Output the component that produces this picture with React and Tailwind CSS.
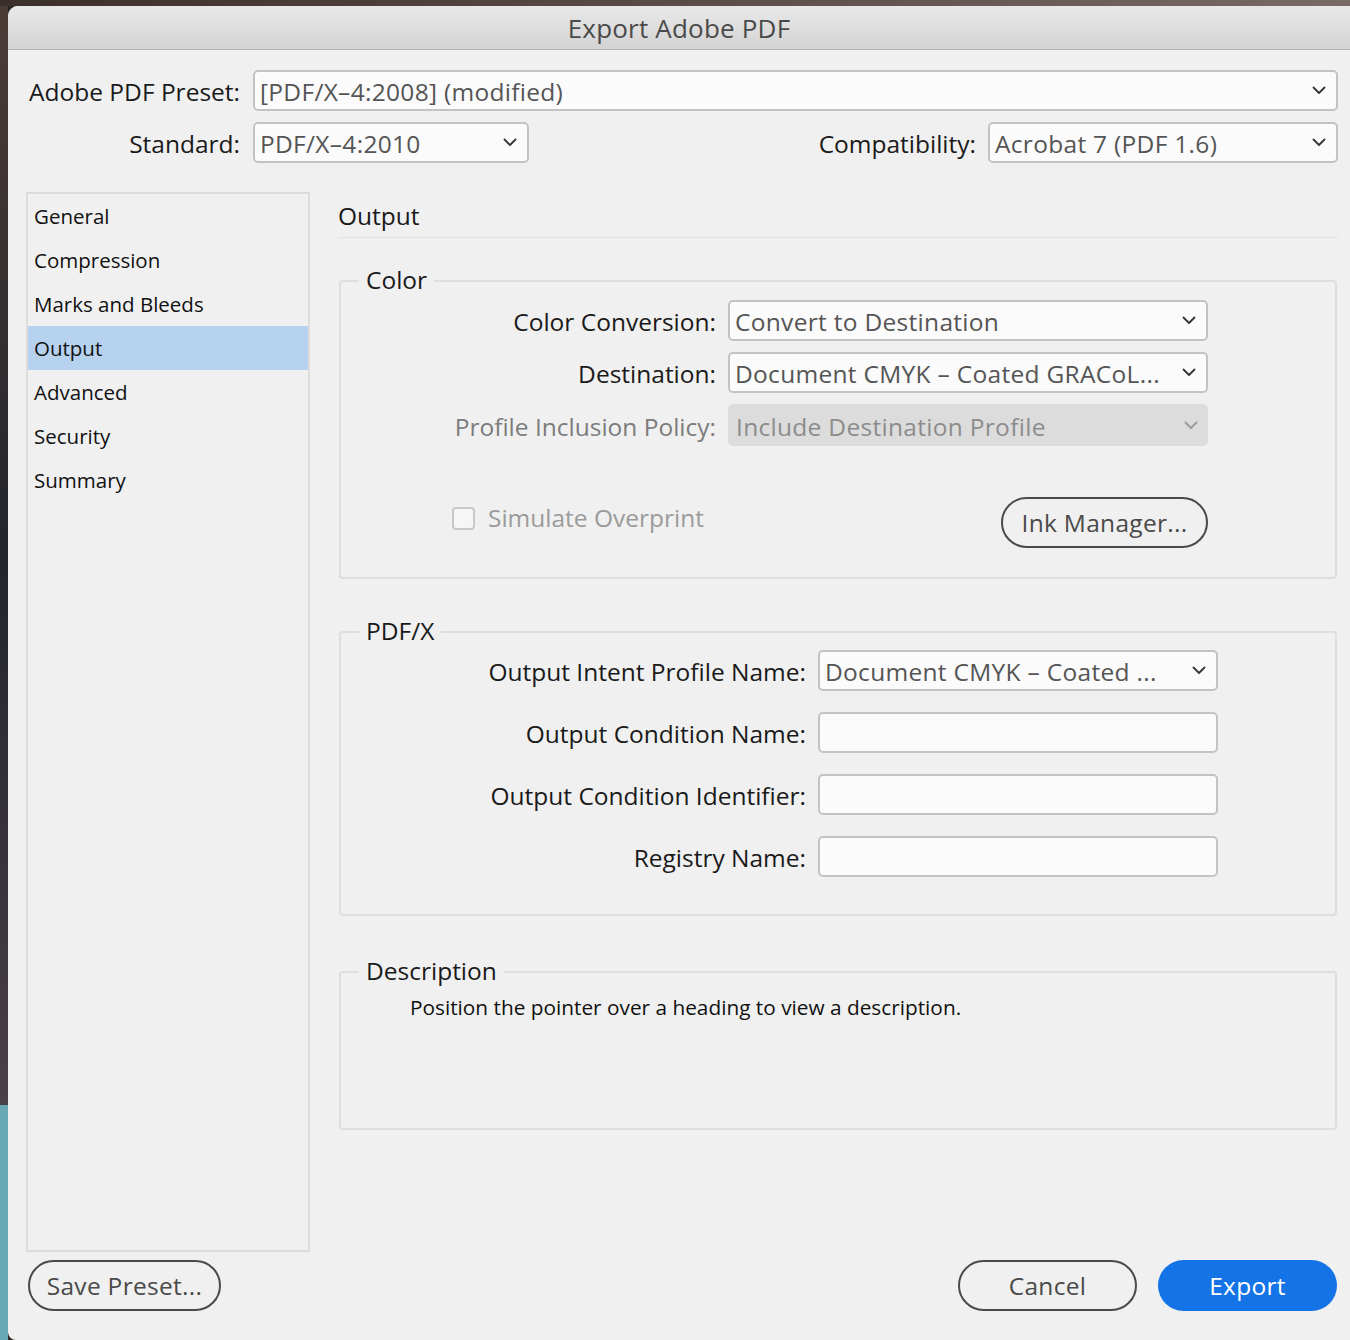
import React from 'react';

const Chevron = ({ color = "#333333" }) => (
  <svg width="14" height="9" viewBox="0 0 14 9" fill="none" className="shrink-0">
    <path d="M1.5 1.5 7 7l5.5-5.5" stroke={color} strokeWidth="1.8" strokeLinecap="round" strokeLinejoin="round" />
  </svg>
);

const Select = ({ value, width = "flex-1", disabled = false }) => (
  <div
    className={`${width} h-full flex items-center rounded-[5px] pr-[10px] text-[24.5px] whitespace-nowrap ${
      disabled
        ? "bg-[#dcdcdc] text-[#8c8c8c] pl-[8px]"
        : "bg-[#fbfbfb] border-2 border-[#c3c3c3] text-[#555555] pl-[5px]"
    }`}
  >
    <span className="flex-1 overflow-hidden translate-y-[2px] tracking-[0.3px]">{value}</span>
    <Chevron color={disabled ? "#9a9a9a" : "#333333"} />
  </div>
);

const Label = ({ children, width = "", muted = false }) => (
  <div className={`${width} text-right text-[24.5px] translate-y-[2px] ${muted ? "text-[#7c7c7c]" : "text-[#1a1a1a]"}`}>
    {children}
  </div>
);

const TextBox = () => (
  <div className="w-[400px] h-full rounded-[5px] border-2 border-[#c3c3c3] bg-[#fbfbfb]" />
);

const Group = ({ title, className = "", children }) => (
  <div className={`relative mx-[1px] border-2 border-[#dedede] rounded-[4px] ${className}`}>
    {/* legend sits on the border */}
    <span className="absolute left-[18px] -top-[17px] px-[7px] bg-[#f0f0f0] text-[24.5px] leading-[30px] text-[#1a1a1a]">
      {title}
    </span>
    {children}
  </div>
);

const PillButton = ({ children, width }) => (
  <button
    className={`${width} h-[51px] rounded-full border-2 border-[#4a4a4a] text-[24.5px] text-[#4a4a4a] flex items-center justify-center`}
  >
    <span className="translate-y-[1px] tracking-[0.3px]">{children}</span>
  </button>
);

const navItems = ["General", "Compression", "Marks and Bleeds", "Output", "Advanced", "Security", "Summary"];

export default function App() {
  return (
    <div className="w-[1350px] h-[1340px] flex flex-col bg-[#2e2624] font-['Open_Sans',sans-serif] overflow-hidden">
      {/* desktop behind the dialog */}
      <div className="h-[6px] bg-gradient-to-r from-[#3b2f2c] via-[#5b4c48] to-[#7a6a66]" />
      <div className="flex-1 flex">
        <div className="w-[8px] flex flex-col">
          <div className="flex-1 bg-gradient-to-b from-[#4b3c37] via-[#22252b] to-[#4a4048]" />
          <div className="h-[235px] bg-[#68a9b5]" />
        </div>

        {/* dialog */}
        <div className="flex-1 flex flex-col bg-[#f0f0f0] rounded-tl-[10px] rounded-bl-[8px] overflow-hidden">
          <div className="h-[44px] pt-[2px] flex items-center justify-center border-b border-[#b2b2b2] bg-gradient-to-b from-[#e9e9e9] to-[#d3d3d3] text-[26px] text-[#4a4a4a] tracking-[0.2px]">
            Export Adobe PDF
          </div>

          <div className="flex-1 flex flex-col pl-[18px] pr-[12px]">
            {/* preset */}
            <div className="mt-[20px] h-[41px] flex items-center">
              <Label width="w-[214px]">Adobe PDF Preset:</Label>
              <div className="ml-[13px] flex-1 h-full flex">
                <Select value="[PDF/X–4:2008] (modified)" />
              </div>
            </div>

            {/* standard + compatibility */}
            <div className="mt-[11px] h-[41px] flex items-center">
              <Label width="w-[214px]">Standard:</Label>
              <div className="ml-[13px] h-full flex">
                <Select value="PDF/X–4:2010" width="w-[276px]" />
              </div>
              <div className="flex-1" />
              <Label>Compatibility:</Label>
              <div className="ml-[12px] h-full flex">
                <Select value="Acrobat 7 (PDF 1.6)" width="w-[350px]" />
              </div>
            </div>

            <div className="mt-[29px] flex">
              {/* sidebar */}
              <div className="w-[284px] h-[1060px] border-2 border-[#dcdcdc] flex flex-col">
                {navItems.map((item) => (
                  <div
                    key={item}
                    className={`h-[44px] pl-[6px] flex items-center text-[20.5px] text-[#111111] ${
                      item === "Output" ? "bg-[#b6d2ee]" : ""
                    }`}
                  >
                    {item}
                  </div>
                ))}
              </div>

              {/* panel */}
              <div className="ml-[28px] flex-1 flex flex-col">
                <div className="h-[46px] pt-[3px] flex items-center border-b border-[#e2e2e2] text-[24.5px] text-[#1a1a1a]">
                  Output
                </div>

                <Group title="Color" className="mt-[42px] pt-[18px] pb-[29px]">
                  <div className="h-[41px] flex items-center">
                    <Label width="w-[375px]">Color Conversion:</Label>
                    <div className="ml-[12px] h-full flex">
                      <Select value="Convert to Destination" width="w-[480px]" />
                    </div>
                  </div>
                  <div className="mt-[11px] h-[41px] flex items-center">
                    <Label width="w-[375px]">Destination:</Label>
                    <div className="ml-[12px] h-full flex">
                      <Select value="Document CMYK – Coated GRACoL..." width="w-[480px]" />
                    </div>
                  </div>
                  <div className="mt-[11px] h-[42px] flex items-center">
                    <Label width="w-[375px]" muted>Profile Inclusion Policy:</Label>
                    <div className="ml-[12px] h-full flex">
                      <Select value="Include Destination Profile" width="w-[480px]" disabled />
                    </div>
                  </div>
                  <div className="mt-[51px] w-[867px] h-[51px] pl-[111px] flex items-center justify-between">
                    <div className="flex items-center mb-[8px]">
                      <div className="w-[23px] h-[23px] rounded-[4px] border-2 border-[#c8c8c8] bg-[#f6f6f6]" />
                      <span className="ml-[13px] text-[24.5px] text-[#9b9b9b]">Simulate Overprint</span>
                    </div>
                    <PillButton width="w-[207px]">Ink Manager...</PillButton>
                  </div>
                </Group>

                <Group title="PDF/X" className="mt-[52px] pt-[17px] pb-[37px]">
                  <div className="h-[41px] flex items-center">
                    <Label width="w-[465px]">Output Intent Profile Name:</Label>
                    <div className="ml-[12px] h-full flex">
                      <Select value="Document CMYK – Coated ..." width="w-[400px]" />
                    </div>
                  </div>
                  {["Output Condition Name:", "Output Condition Identifier:", "Registry Name:"].map((label) => (
                    <div key={label} className="mt-[21px] h-[41px] flex items-center">
                      <Label width="w-[465px]">{label}</Label>
                      <div className="ml-[12px] h-full flex">
                        <TextBox />
                      </div>
                    </div>
                  ))}
                </Group>

                <Group title="Description" className="mt-[55px] h-[159px] pt-[20px] pl-[69px]">
                  <div className="text-[20.8px] leading-[28px] text-[#111111]">
                    Position the pointer over a heading to view a description.
                  </div>
                </Group>
              </div>
            </div>

            {/* footer buttons */}
            <div className="mt-[8px] flex items-center pl-[2px] pr-[1px]">
              <PillButton width="w-[193px]">Save Preset...</PillButton>
              <div className="flex-1" />
              <PillButton width="w-[179px]">Cancel</PillButton>
              <button className="ml-[21px] w-[179px] h-[51px] rounded-full bg-[#1473e6] text-[24.5px] text-white flex items-center justify-center">
                <span className="translate-y-[1px] tracking-[0.3px]">Export</span>
              </button>
            </div>
          </div>
        </div>
      </div>
    </div>
  );
}
